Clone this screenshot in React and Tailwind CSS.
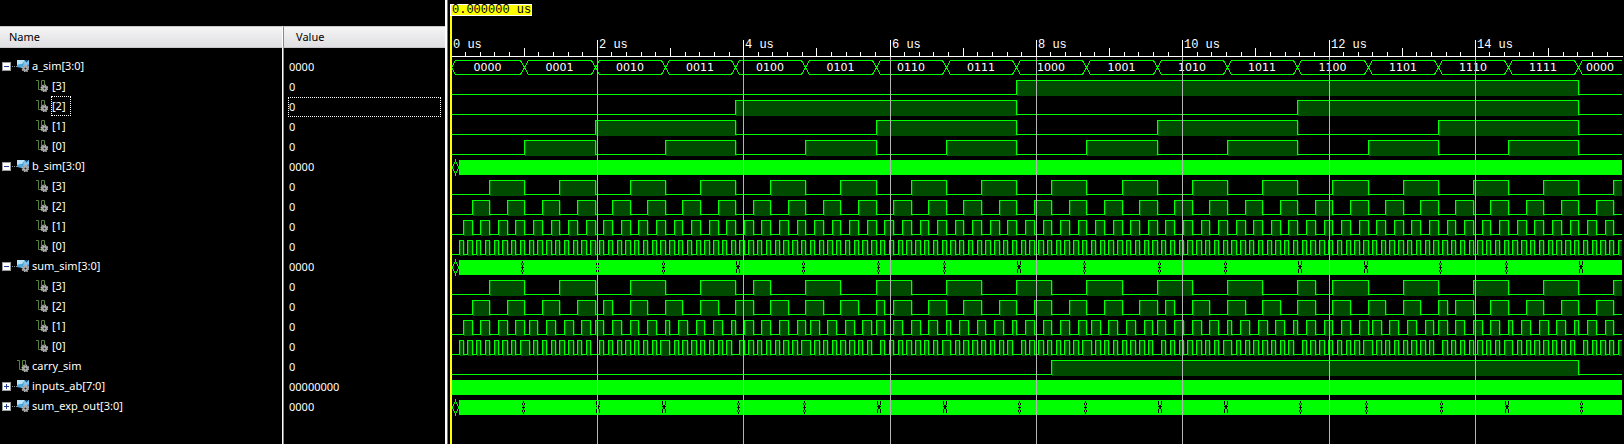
import { useState } from "react";

/* ---- time scale ---- */
const ORIGIN = 3;
const END = 1174;
const ROW = 20;
const FIRST_ROW = 60;
const COUNT = 272;

const edgeX = (n) =>
  n === 0 ? ORIGIN : n === 1 ? 11 : Math.min(END, Math.floor(76.78 + (n - 16) * 4.3919));
const tickX = (k) => Math.floor(3.02 + k * 14.6335);

/* ---- simulated adder ---- */
const samples = [];
let c2 = 0;
let c3 = 0;
let carry = 0;
const bit = (v, i) => (v >> i) & 1;
const latch = (a, b, held) => (a === b ? a : held);
for (let n = 0; n < COUNT; n++) {
  const a = (n >> 4) & 15;
  const b = n & 15;
  const c1 = bit(a, 0) & bit(b, 0);
  c2 = latch(bit(a, 1), bit(b, 1), c2);
  c3 = latch(bit(a, 2), bit(b, 2), c3);
  carry = latch(bit(a, 3), bit(b, 3), carry);
  const carries = [0, c1, c2, c3];
  let sum = 0;
  for (let i = 0; i < 4; i++) sum |= (bit(a, i) ^ bit(b, i) ^ carries[i]) << i;
  samples.push({ a, b, sum, carry });
}

const bits = (key) =>
  [3, 2, 1, 0].map((i) => ({
    name: `[${i}]`,
    id: `${key}${i}`,
    value: "0",
    read: (s) => bit(s[key], i),
  }));

const sumGaps = [
  [74, 0], [149, 0], [215, 0], [288, 1], [355, 0], [430, 0], [496, 0], [569, 1],
  [636, 0], [711, 0], [777, 0], [850, 1], [916, 1], [992, 0], [1058, 0], [1131, 1],
];
const expectedGaps = [
  [75, 0], [148, 1], [214, 1], [290, 0], [356, 0], [429, 1], [495, 1], [571, 0],
  [637, 0], [710, 1], [776, 1], [852, 0], [918, 0], [993, 0], [1057, 1], [1133, 0],
];

const signals = [
  { id: "a", name: "a_sim[3:0]", value: "0000", kind: "words", children: bits("a") },
  { id: "b", name: "b_sim[3:0]", value: "0000", kind: "dense", lead: true, gaps: [], children: bits("b") },
  { id: "sum", name: "sum_sim[3:0]", value: "0000", kind: "dense", lead: true, gaps: sumGaps, children: bits("sum") },
  { id: "carry", name: "carry_sim", value: "0", read: (s) => s.carry },
  { id: "inputs", name: "inputs_ab[7:0]", value: "00000000", kind: "dense", gaps: [], children: [] },
  { id: "expected", name: "sum_exp_out[3:0]", value: "0000", kind: "dense", lead: true, gaps: expectedGaps, children: [] },
];

/* ---- icons ---- */
function Gear() {
  return (
    <g>
      <circle cx="8.4" cy="8.4" r="3" fill="#8f8f8f" />
      <circle cx="8.4" cy="8.4" r="3.2" fill="none" stroke="#b5b5b5" strokeWidth="1.4" strokeDasharray="1.4 1.1" />
      <circle cx="8.4" cy="8.4" r="1.7" fill="#6a6a6a" stroke="#d2d2d2" strokeWidth="0.8" />
      <circle cx="8.6" cy="8.6" r="0.7" fill="#1c1c1c" />
    </g>
  );
}

function BusIcon() {
  return (
    <svg width="12" height="12" viewBox="0 0 12 12" aria-hidden="true">
      <path d="M0 0H8L9.5 2L12 0V8H4L0 7Z" fill="#3a95d2" />
      <path d="M0 0H8L5 4L0 5Z" fill="#b9e2f6" />
      <path d="M8 0L9.5 2L12 0V4L8 6L6 4Z" fill="#7fc4ec" />
      <path d="M0 5L5 4L6 7H0Z" fill="#4fa6de" />
      <path d="M7.5 0L9.5 2.5L11 0Z" fill="#1b4f78" />
      <Gear />
    </svg>
  );
}

function BitIcon() {
  return (
    <svg width="12" height="12" viewBox="0 0 12 12" aria-hidden="true">
      <path d="M0 0.5H2.5V9.5H5.5V0.5H8.5V5" fill="none" stroke="#55843f" />
      <Gear />
    </svg>
  );
}

function Toggle({ open, name, onClick }) {
  return (
    <button
      type="button"
      aria-expanded={open}
      aria-label={name}
      onClick={onClick}
      className="h-[9px] w-[9px] shrink-0 border border-[#9a9a9a] bg-white"
    >
      <svg width="7" height="7" viewBox="0 0 7 7" className="block" aria-hidden="true">
        <path d={open ? "M1 3.5H6" : "M1 3.5H6M3.5 1V6"} stroke="#24408e" />
      </svg>
    </button>
  );
}

/* ---- waveforms ---- */
function Pulse({ read, y }) {
  const runs = [];
  samples.forEach((s, n) => {
    const v = read(s);
    const last = runs[runs.length - 1];
    if (last && last.v === v) last.to = n + 1;
    else runs.push({ v, from: n, to: n + 1 });
  });
  const highs = runs
    .filter((r) => r.v)
    .map((r) => [edgeX(r.from), edgeX(r.to)])
    .filter(([x0]) => x0 < END);
  let line = `M${ORIGIN} ${y + 14.5}`;
  highs.forEach(([x0, x1]) => {
    line += `H${x0 + 0.5}V${y + 0.5}H${x1 >= END ? END : x1 + 0.5}`;
    if (x1 < END) line += `V${y + 14.5}`;
  });
  if (!highs.length || highs[highs.length - 1][1] < END) line += `H${END}`;
  return (
    <g>
      {highs.map(([x0, x1]) => (
        <g key={x0}>
          <rect x={x0 + 1} y={y + 1} width={Math.min(x1 + 2, END) - x0 - 1} height="15" fill="#004b00" />
          <rect x={x0 + 1} y={y + 1} width="1" height="15" fill="#007800" />
        </g>
      ))}
      <path d={line} fill="none" stroke="#00ff00" />
    </g>
  );
}

function Words({ y }) {
  const words = [];
  for (let i = 0; i <= 16; i++) {
    const x0 = i === 0 ? ORIGIN : edgeX(i * 16);
    const x1 = i === 16 ? END : edgeX(i * 16 + 16);
    words.push({ x0, x1, open: i === 16, text: (i % 16).toString(2).padStart(4, "0") });
  }
  return (
    <g>
      {words.map(({ x0, x1, open, text }) => {
        const l = x0 + 0.5;
        const r = x1 + 0.5;
        const t = y + 0.5;
        const m = y + 7.5;
        const b = y + 14.5;
        return (
          <g key={x0}>
            <path
              d={
                open
                  ? `M${x1} ${t}H${l + 4}L${l} ${m}L${l + 4} ${b}H${x1}`
                  : `M${l} ${m}L${l + 4} ${t}H${r - 4}L${r} ${m}L${r - 4} ${b}H${l + 4}Z`
              }
              fill="none"
              stroke="#00ff00"
            />
            <text x={(x0 + x1) / 2} y={y + 11} textAnchor="middle" fill="#fff" className="font-['DejaVu_Sans',sans-serif] text-[11px]">
              {text}
            </text>
          </g>
        );
      })}
    </g>
  );
}

function Dense({ y, lead, gaps }) {
  const start = lead ? 11 : 4;
  return (
    <g>
      {lead && <path d={`M4.5 ${y + 7.5}L7.5 ${y + 0.5}L10.5 ${y + 7.5}L7.5 ${y + 14.5}Z`} fill="none" stroke="#00ff00" />}
      <rect x={start} y={y} width={END - start} height="15" fill="#00ff00" />
      {gaps.map(([x, wide]) => (
        <path
          key={x}
          fill="#000"
          d={
            wide
              ? `M${x} ${y + 1}h1v4h2v-4h1v4h-1v1h1v1h-1v2h1v4h-1v-4h-2v4h-1v-4h1v-2h-1v-1h1v-1h-1z`
              : `M${x} ${y + 1}h1v2h-1zM${x - 1} ${y + 3}h1v2h-1zM${x + 1} ${y + 3}h1v2h-1zM${x} ${y + 5}h1v2h1v1h-1v2h-1v-2h-1v-1h1zM${x - 1} ${y + 10}h1v2h-1zM${x + 1} ${y + 10}h1v2h-1zM${x} ${y + 12}h1v2h-1z`
          }
        />
      ))}
    </g>
  );
}

function Waves({ rows }) {
  const ticks = Array.from({ length: 79 }, (_, i) => i + 1);
  const majors = ticks.filter((k) => k % 10 === 0);
  return (
    <svg className="absolute inset-0 h-full w-full" shapeRendering="crispEdges" role="img" aria-label="Waveforms">
      {ticks.map((k) => {
        const top = k % 10 === 0 ? 40 : k % 5 === 0 ? 48 : 52;
        return <rect key={k} x={tickX(k)} y={top} width="1" height={56 - top} fill="#fff" />;
      })}
      <rect x="4" y="56" width="1171" height="1" fill="#fff" />
      {[0, ...majors].map((k) => (
        <text key={k} x={tickX(k) + 2} y="48" fill="#fff" className="font-['Liberation_Mono',monospace] text-[12px]">
          {`${k / 5} us`}
        </text>
      ))}
      {rows.map((row, i) => {
        const y = FIRST_ROW + i * ROW;
        if (row.kind === "words") return <Words key={row.id} y={y} />;
        if (row.kind === "dense") return <Dense key={row.id} y={y} lead={row.lead} gaps={row.gaps} />;
        return <Pulse key={row.id} y={y} read={row.read} />;
      })}
      {majors.map((k) => (
        <rect key={k} x={tickX(k)} y="57" width="1" height="100%" fill="#b4b4b4" />
      ))}
      <rect x="2" y="4" width="2" height="100%" fill="#ffff00" />
      <rect x="2.5" y="4.5" width="81" height="11" fill="#ffff00" stroke="#fff" />
      <text x="4" y="13" fill="#000" className="font-['Liberation_Mono',monospace] text-[12px]">
        0.000000 us
      </text>
    </svg>
  );
}

const headCell =
  "h-[22px] border-y border-y-[#c9c9cc] bg-linear-to-b from-[#f5f5f5] to-[#dfdfe3] p-0 text-left font-normal text-black";

export default function App() {
  const [open, setOpen] = useState({ a: true, b: true, sum: true });
  const [selected, setSelected] = useState("a2");
  const rows = signals.flatMap((s) => [
    s,
    ...(open[s.id] && s.children ? s.children.map((c) => ({ ...c, child: true })) : []),
  ]);

  return (
    <div className="flex min-h-screen overflow-hidden bg-black font-['Noto_Sans',sans-serif] text-[11px] leading-4 text-white">
      <div className="flex w-[445px] shrink-0 flex-col pt-[26px]">
        <table className="w-full flex-1 table-fixed border-separate border-spacing-0">
          <thead>
            <tr className="h-[22px]">
              <th scope="col" className={`${headCell} w-[283px] border-r border-r-white pl-[9px]`}>
                Name
              </th>
              <th scope="col" className={`${headCell} border-l border-l-[#888] pl-3`}>
                Value
              </th>
            </tr>
          </thead>
          <tbody>
            <tr className="h-[9px]">
              <td className="border-r border-white p-0" />
              <td className="border-l border-[#888] p-0" />
            </tr>
            {rows.map((row) => (
              <tr key={row.id} className="h-5" onClick={() => setSelected(row.id)}>
                <td className="h-5 border-r border-white p-0">
                  <div className={`flex h-5 items-center pb-0.5 ${row.child ? "pl-9" : row.kind ? "pl-0.5" : "pl-[17px]"}`}>
                    {row.kind && (
                      <>
                        <Toggle
                          open={!!open[row.id]}
                          name={`Expand ${row.name}`}
                          onClick={() => setOpen({ ...open, [row.id]: !open[row.id] })}
                        />
                        <span className="ml-px w-[5px] border-t border-dotted border-[#8a8a8a]" />
                      </>
                    )}
                    {row.kind ? <BusIcon /> : <BitIcon />}
                    <span
                      className={`flex h-5 items-center border border-dotted pr-1 ${
                        row.child ? "ml-[3px]" : "ml-0.5"
                      } ${selected === row.id ? "border-white" : "border-transparent"}`}
                    >
                      {row.name}
                    </span>
                  </div>
                </td>
                <td className="h-5 border-l border-[#888] p-0 pl-1 pr-1">
                  <div
                    className={`flex h-5 items-center border border-dotted ${
                      selected === row.id ? "border-white" : "border-transparent"
                    }`}
                  >
                    {row.value}
                  </div>
                </td>
              </tr>
            ))}
            <tr>
              <td className="border-r border-white p-0" />
              <td className="border-l border-[#888] p-0" />
            </tr>
          </tbody>
        </table>
      </div>
      <div className="w-[3px] shrink-0 border-r border-[#777] bg-white" />
      <div className="relative min-w-0 flex-1">
        <Waves rows={rows} />
      </div>
    </div>
  );
}
